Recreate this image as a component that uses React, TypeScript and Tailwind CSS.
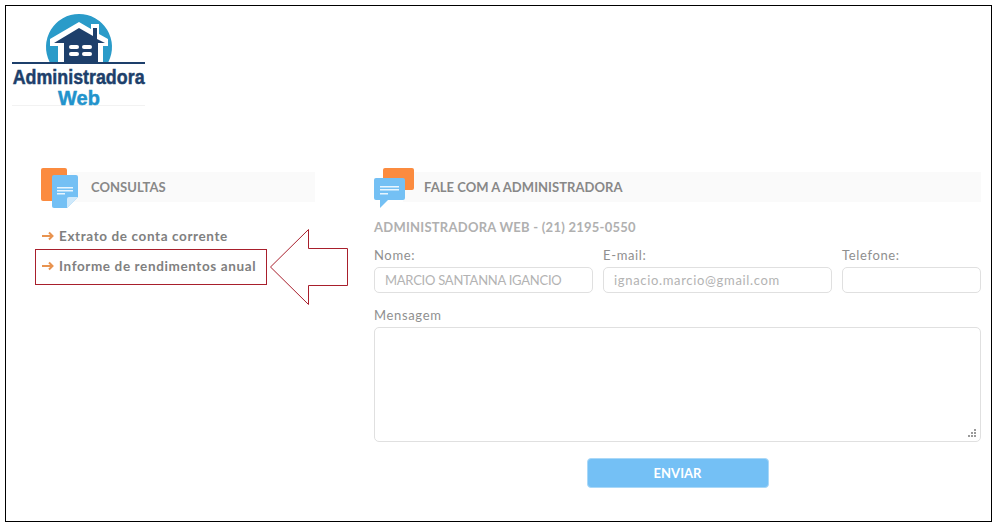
import React from "react";

const Logo = () => (
  <div className="w-[133px] h-[93px] flex flex-col items-center font-['Liberation_Sans',sans-serif] font-bold border-b border-[#f2f2f2]">
    <svg width="133" height="52" viewBox="0 0 133 52" className="shrink-0">
      <path d="M37.6 49 A33 33 0 1 1 96.4 49 Z" fill="#2a9bc9" />
      <path d="M46 49 V33 H38 V26 L67 9 L79 16 V11 H87 V21 L96 26 V33 H91 V49 Z" fill="#fff" />
      <path d="M52 49 V30 H42 L67 15 L81 23 V15 H85 V26 L93 30 H86 V49 Z" fill="#1d3f6b" />
      <rect x="57" y="32" width="10" height="4" rx="2" fill="#fff" />
      <rect x="70" y="32" width="10" height="4" rx="2" fill="#fff" />
      <rect x="57" y="39" width="10" height="4" rx="2" fill="#fff" />
      <rect x="70" y="39" width="10" height="4" rx="2" fill="#fff" />
      <rect x="0" y="49" width="133" height="2" fill="#1d3f6b" />
    </svg>
    <div className="mt-[1px] text-[#1d3f6b] text-[21px] leading-[21px] whitespace-nowrap scale-x-[0.85] [-webkit-text-stroke:0.5px_#1d3f6b]">Administradora</div>
    <div className="text-[#2293cc] text-[21px] leading-[21px] whitespace-nowrap scale-x-[0.95] [-webkit-text-stroke:0.5px_#2293cc]">Web</div>
  </div>
);

const DocIcon = () => (
  <svg width="38" height="40" viewBox="0 0 38 40" className="shrink-0">
    <rect x="0" y="0" width="26" height="33" rx="2" fill="#fb8b3f" />
    <path d="M13 7 H35 a2 2 0 0 1 2 2 V29 L26 40 H13 a2 2 0 0 1 -2 -2 V9 a2 2 0 0 1 2 -2 Z" fill="#74c0f4" />
    <path d="M37 29 L26 40 V31 a2 2 0 0 1 2 -2 Z" fill="#cfe9fb" />
    <rect x="16" y="19" width="16" height="1.5" fill="#e8f5fe" />
    <rect x="16" y="22" width="16" height="1.5" fill="#e8f5fe" />
    <rect x="16" y="25" width="8" height="1.5" fill="#e8f5fe" />
  </svg>
);

const ChatIcon = () => (
  <svg width="40" height="40" viewBox="0 0 40 40" className="shrink-0">
    <rect x="9" y="0" width="31" height="22" rx="2" fill="#fb8b3f" />
    <path d="M2 10 H29 a2 2 0 0 1 2 2 V30 a2 2 0 0 1 -2 2 H14 L6 40 V32 H2 a2 2 0 0 1 -2 -2 V12 a2 2 0 0 1 2 -2 Z" fill="#74c0f4" />
    <rect x="6" y="18" width="19" height="1.5" fill="#e8f5fe" />
    <rect x="6" y="21" width="19" height="1.5" fill="#e8f5fe" />
    <rect x="6" y="25" width="8" height="1.5" fill="#e8f5fe" />
  </svg>
);

const SectionTitle = ({ icon, title }: { icon: React.ReactNode; title: string }) => (
  <div className="relative h-[40px] pb-[2px] flex items-center">
    <div className="absolute left-0 top-0 z-10">{icon}</div>
    <div className="flex-1 h-[30px] ml-[29px] pl-[21px] pt-[1px] bg-[#fafafa] flex items-center text-[13px] font-bold text-[#888888] tracking-[0.05px]">
      {title}
    </div>
  </div>
);

const Arrow = () => (
  <svg width="12" height="10" viewBox="0 0 12 10" className="shrink-0 mr-[5px]">
    <path d="M0 5 H10.5 M7 1.5 L10.5 5 L7 8.5" fill="none" stroke="#e8934f" strokeWidth="2" />
  </svg>
);

const Field = ({ label, value, className, track }: { label: string; value: string; className: string; track: string }) => (
  <div className={className}>
    <div className="text-[13px] leading-[18px] text-[#8f8f8f] tracking-[0.65px] mb-[3px]">{label}</div>
    <div className={`h-[26px] border border-[#e0e0e0] rounded-[5px] px-[10px] pt-[1px] flex items-center text-[13px] text-[#b3b3b3] whitespace-nowrap overflow-hidden ${track}`}>
      {value}
    </div>
  </div>
);

export default function App() {
  return (
    <div className="w-[993px] h-[524px] bg-white pl-[5px] pt-[5px] font-['Lato',sans-serif]">
      <div className="relative w-[987px] h-[517px] border border-black pl-[6px] pt-[7px]">
        <Logo />

        <div className="flex mt-[62px] pr-[10px]">
          <div className="w-[274px] ml-[29px] shrink-0">
            <SectionTitle icon={<DocIcon />} title="CONSULTAS" />
            <div className="mt-[15px] -ml-[6px] text-[13.5px] font-bold text-[#808080] tracking-[0.62px] whitespace-nowrap">
              <div className="h-[26px] pl-[7px] flex items-center">
                <Arrow />Extrato de conta corrente
              </div>
              <div className="w-[232px] h-[36px] border border-[#a81f2c] pl-[6px] pb-[2px] flex items-center">
                <Arrow />Informe de rendimentos anual
              </div>
            </div>
          </div>

          <div className="flex-1 ml-[59px]">
            <SectionTitle icon={<ChatIcon />} title="FALE COM A ADMINISTRADORA" />
            <div className="mt-[10px] text-[13px] leading-[18px] font-bold text-[#b0b0b0] tracking-[0.25px]">
              ADMINISTRADORA WEB - (21) 2195-0550
            </div>
            <div className="flex gap-[10px] mt-[10px]">
              <Field label="Nome:" value="MARCIO SANTANNA IGANCIO" className="w-[219px]" track="tracking-[-0.25px]" />
              <Field label="E-mail:" value="ignacio.marcio@gmail.com" className="w-[229px]" track="tracking-[0.67px]" />
              <Field label="Telefone:" value="" className="w-[139px]" track="tracking-normal" />
            </div>
            <div className="mt-[13px] text-[13px] leading-[18px] text-[#8f8f8f] tracking-[0.65px]">Mensagem</div>
            <div className="relative mt-[3px] h-[115px] border border-[#e0e0e0] rounded-[5px]">
              <svg width="9" height="9" viewBox="0 0 9 9" className="absolute right-[3px] bottom-[3px]">
                <g fill="#9a9a9a">
                  <rect x="6" y="0" width="2" height="2" />
                  <rect x="3" y="3" width="2" height="2" />
                  <rect x="6" y="3" width="2" height="2" />
                  <rect x="0" y="6" width="2" height="2" />
                  <rect x="3" y="6" width="2" height="2" />
                  <rect x="6" y="6" width="2" height="2" />
                </g>
              </svg>
            </div>
            <div className="flex justify-center mt-[16px]">
              <button className="w-[182px] h-[30px] pt-[1px] bg-[#74c0f5] border border-[#a9d8f8] rounded-[4px] text-white text-[13px] font-bold tracking-normal">
                ENVIAR
              </button>
            </div>
          </div>
        </div>

        {/* seta vermelha sobre o conteudo */}
        <svg width="80" height="78" viewBox="0 0 80 78" className="absolute left-[263px] top-[222px]">
          <path d="M1.5 39 L39.5 1.5 V20.5 H78.5 V57.5 H39.5 V76.5 Z" fill="#fff" stroke="#a81f2c" strokeWidth="1" />
        </svg>
      </div>
    </div>
  );
}
